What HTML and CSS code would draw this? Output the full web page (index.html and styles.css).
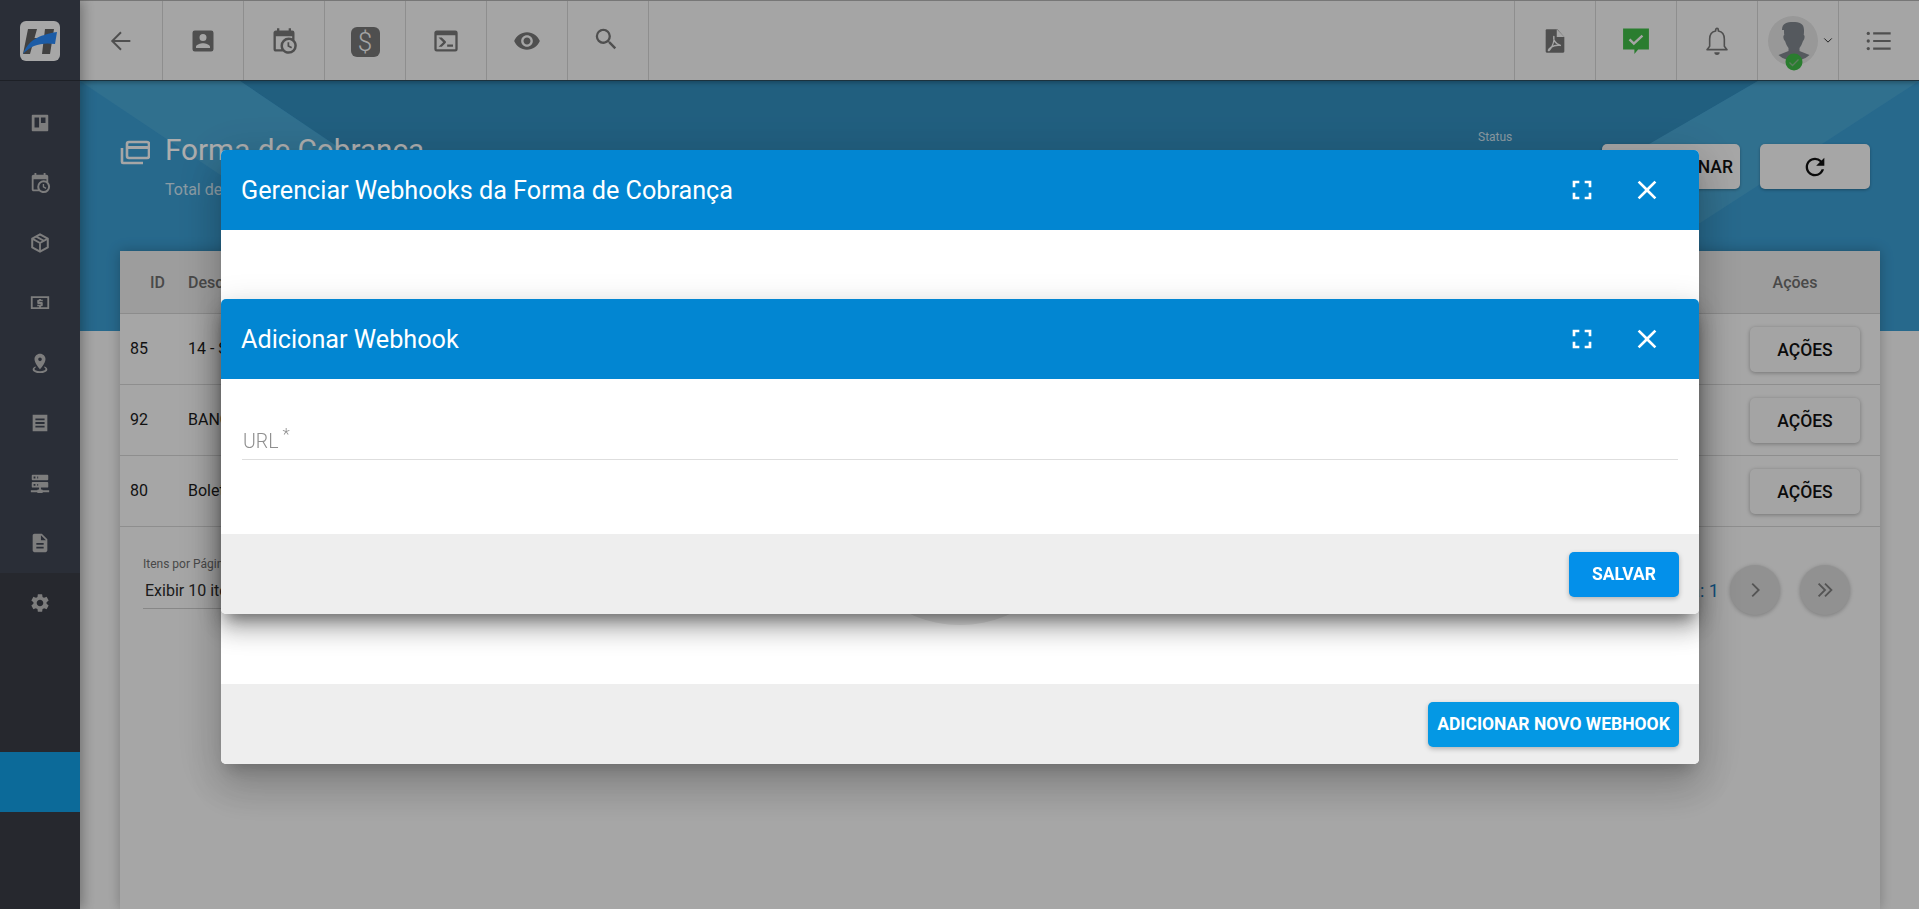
FILE: index.html
```html
<!DOCTYPE html>
<html lang="pt-BR">
<head>
<meta charset="utf-8">
<title>Forma de Cobrança</title>
<link rel="stylesheet" href="styles.css">
</head>
<body>
<svg class="defs" width="0" height="0" aria-hidden="true">
  <symbol id="i-calclock" viewBox="0 0 24 24"><path d="M15,13H16.5V15.82L18.94,17.23L18.19,18.53L15,16.69V13M19,8H5V19H9.67C9.24,18.09 9,17.07 9,16A7,7 0 0,1 16,9C17.07,9 18.09,9.24 19,9.67V8M5,21C3.89,21 3,20.1 3,19V5C3,3.89 3.89,3 5,3H6V1H8V3H16V1H18V3H19A2,2 0 0,1 21,5V11.1C22.24,12.36 23,14.09 23,16A7,7 0 0,1 16,23C14.09,23 12.36,22.24 11.1,21H5M16,11.15A4.85,4.85 0 0,0 11.15,16C11.15,18.68 13.32,20.85 16,20.85A4.85,4.85 0 0,0 20.85,16C20.85,13.32 18.68,11.15 16,11.15Z"/></symbol>
  <symbol id="i-full" viewBox="0 0 24 24"><path d="M7 14H5v5h5v-2H7v-3zm-2-4h2V7h3V5H5v5zm12 7h-3v2h5v-5h-2v3zM14 5v2h3v3h2V5h-5z"/></symbol>
  <symbol id="i-close" viewBox="0 0 24 24"><path d="M19 6.41L17.59 5 12 10.59 6.41 5 5 6.41 10.59 12 5 17.59 6.41 19 12 13.41 17.59 19 19 17.59 13.41 12z"/></symbol>
</svg>

<div class="app">
  <aside class="sidebar">
    <div class="logo-cell">
      <svg class="logo" viewBox="0 0 40 40">
        <rect width="40" height="40" rx="6" fill="#f6f6f6"/>
        <path d="M8 8h9L10 33H3zM25 8h9l-4 25h-8zM12 17h18l-1 6H11z" fill="#606060"/>
        <path d="M3 33C8 20 18 14 37 11l-2 12C22 21 11 24 3 33z" fill="#2a88f5"/>
      </svg>
    </div>
    <nav class="side-nav">
      <a class="side-item"><svg viewBox="0 0 24 24"><path fill-rule="evenodd" d="M4 3h16a1 1 0 011 1v16a1 1 0 01-1 1H4a1 1 0 01-1-1V4a1 1 0 011-1zm2 3v11h5V6H6zm7 0v6h5V6h-5z"/></svg></a>
      <a class="side-item"><svg><use href="#i-calclock"/></svg></a>
      <a class="side-item"><svg viewBox="0 0 24 24"><path d="M12 2.500l8.500 4.700v9.600L12 21.500l-8.500-4.700V7.200L12 2.500z" fill="none" stroke="currentColor" stroke-width="2.200" stroke-linejoin="round"/><path d="M4 7.500l8 4.500 8-4.500M12 12v9M8 5l8 4.600" fill="none" stroke="currentColor" stroke-width="2"/></svg></a>
      <a class="side-item"><svg viewBox="0 0 24 24"><path fill-rule="evenodd" d="M2 5h20v14H2V5zm2 2v10h16V7H4zm7 1h2v1h2v1.600h-3.600v.8H14a1 1 0 011 1V15a1 1 0 01-1 1h-1v1h-2v-1H9v-1.600h3.600v-.8H10a1 1 0 01-1-1V10a1 1 0 011-1h1V8z" transform="translate(0 -.5)"/></svg></a>
      <a class="side-item"><svg viewBox="0 0 24 24"><path d="M12,2C15.31,2 18,4.66 18,7.95C18,12.41 12,19 12,19C12,19 6,12.41 6,7.95C6,4.66 8.69,2 12,2M12,6A2,2 0 0,0 10,8A2,2 0 0,0 12,10A2,2 0 0,0 14,8A2,2 0 0,0 12,6M20,19C20,21.21 16.42,23 12,23C7.58,23 4,21.21 4,19C4,17.71 5.22,16.56 7.11,15.83L7.75,16.74C6.67,17.19 6,17.81 6,18.5C6,19.88 8.69,21 12,21C15.31,21 18,19.88 18,18.5C18,17.81 17.33,17.19 16.25,16.74L16.89,15.83C18.78,16.56 20,17.71 20,19Z"/></svg></a>
      <a class="side-item"><svg viewBox="0 0 24 24"><path fill-rule="evenodd" d="M4 3h16v18H4V3zm3 4v2h10V7H7zm0 4v2h10v-2H7zm0 4v2h10v-2H7z"/></svg></a>
      <a class="side-item"><svg viewBox="0 0 24 24"><path d="M13,19H14A1,1 0 0,1 15,20H22V22H15A1,1 0 0,1 14,23H10A1,1 0 0,1 9,22H2V20H9A1,1 0 0,1 10,19H11V17H4A1,1 0 0,1 3,16V12A1,1 0 0,1 4,11H20A1,1 0 0,1 21,12V16A1,1 0 0,1 20,17H13V19M4,3H20A1,1 0 0,1 21,4V8A1,1 0 0,1 20,9H4A1,1 0 0,1 3,8V4A1,1 0 0,1 4,3M9,7H10V5H9V7M9,15H10V13H9V15M5,5V7H7V5H5M5,13V15H7V13H5Z"/></svg></a>
      <a class="side-item"><svg viewBox="0 0 24 24"><path d="M14 2H6c-1.100 0-1.990.9-1.990 2L4 20c0 1.100.89 2 1.990 2H18c1.100 0 2-.9 2-2V8l-6-6zm2 16H8v-2h8v2zm0-4H8v-2h8v2zm-3-5V3.500L18.500 9H13z"/></svg></a>
      <a class="side-item side-item-last"><svg viewBox="0 0 24 24"><path d="M19.14 12.94c.04-.3.06-.61.06-.94 0-.32-.02-.64-.07-.94l2.03-1.58a.49.49 0 00.12-.61l-1.92-3.32a.488.488 0 00-.59-.22l-2.39.96c-.5-.38-1.03-.7-1.62-.94l-.36-2.54a.484.484 0 00-.48-.41h-3.84c-.24 0-.43.17-.47.41l-.36 2.54c-.59.24-1.13.57-1.62.94l-2.39-.96c-.22-.08-.47 0-.59.22L2.74 8.87c-.12.21-.08.47.12.61l2.03 1.58c-.05.3-.09.63-.09.94s.02.64.07.94l-2.03 1.58a.49.49 0 00-.12.61l1.92 3.32c.12.22.37.29.59.22l2.39-.96c.5.38 1.03.7 1.62.94l.36 2.54c.05.24.24.41.48.41h3.84c.24 0 .44-.17.47-.41l.36-2.54c.59-.24 1.13-.56 1.62-.94l2.39.96c.22.08.47 0 .59-.22l1.92-3.32c.12-.22.07-.47-.12-.61l-2.01-1.58zM12 15.6c-1.98 0-3.6-1.62-3.6-3.6s1.62-3.6 3.6-3.6 3.6 1.62 3.6 3.6-1.62 3.6-3.6 3.6z"/></svg></a>
    </nav>
    <div class="side-rest">
      <div class="side-active"></div>
    </div>
  </aside>

  <div class="main">
    <header class="topbar">
      <a class="top-cell top-cell-first"><svg viewBox="0 0 24 24" class="ic"><path d="M20 12H4.500M12 4.500L4.500 12l7.500 7.500" fill="none" stroke="currentColor" stroke-width="1.700"/></svg></a>
      <a class="top-cell"><svg viewBox="0 0 24 24" class="ic"><path d="M3 5v14a2 2 0 002 2h14a2 2 0 002-2V5a2 2 0 00-2-2H5a2 2 0 00-2 2zm12 4a3 3 0 11-6 0 3 3 0 016 0zm-9 8c0-2 4-3.100 6-3.100s6 1.100 6 3.100v1H6v-1z"/></svg></a>
      <a class="top-cell"><svg class="ic"><use href="#i-calclock"/></svg></a>
      <a class="top-cell"><span class="dollar">$</span></a>
      <a class="top-cell"><svg viewBox="0 0 24 24" class="ic"><path d="M20,19V7H4V19H20M20,3A2,2 0 0,1 22,5V19A2,2 0 0,1 20,21H4A2,2 0 0,1 2,19V5C2,3.89 2.9,3 4,3H20M13,17V15H18V17H13M9.58,13L5.57,9H8.4L11.7,12.3C12.09,12.69 12.09,13.33 11.7,13.72L8.42,17H5.59L9.58,13Z"/></svg></a>
      <a class="top-cell"><svg viewBox="0 0 24 24" class="ic"><path d="M12 4.500C7 4.500 2.730 7.610 1 12c1.730 4.390 6 7.500 11 7.500s9.270-3.110 11-7.500c-1.730-4.390-6-7.500-11-7.500zM12 17c-2.760 0-5-2.240-5-5s2.240-5 5-5 5 2.240 5 5-2.240 5-5 5zm0-8c-1.660 0-3 1.340-3 3s1.340 3 3 3 3-1.340 3-3-1.340-3-3-3z"/></svg></a>
      <a class="top-cell"><svg viewBox="0 0 24 24" class="ic"><path d="M15.500 14h-.79l-.28-.27A6.471 6.471 0 0016 9.500 6.500 6.500 0 109.500 16c1.610 0 3.090-.59 4.230-1.570l.27.28v.79l5 4.990L20.490 19l-4.990-5zm-6 0C7.010 14 5 11.990 5 9.500S7.010 5 9.500 5 14 7.010 14 9.500 11.990 14 9.500 14z" transform="translate(-1.500 -1.500)"/></svg></a>
      <div class="top-space"></div>
      <a class="top-cell top-cell-r"><svg viewBox="0 0 24 24" class="ic"><path d="M5 2h9l6 6.500V21a1 1 0 01-1 1H5a1 1 0 01-1-1V3a1 1 0 011-1z"/><path d="M13.500 2v6.500H20" fill="#f4f4f4"/><path d="M11 8c-.6 3 1 6 5.600 7.800-3-.6-7.500.2-9.800 3.200-1 1.300-.3 1.600.5.700C9.600 17 11.600 12 11 8z" fill="none" stroke="#f4f4f4" stroke-width="1.200" stroke-linejoin="round"/></svg></a>
      <a class="top-cell top-cell-r"><svg viewBox="0 0 26 26" class="ic"><path d="M1 1.500h24v19.500H15l-3.500 4v-4H1z" fill="#3fb846"/><path d="M7 11.500l4 4 8-7.500" fill="none" stroke="#f4f4f4" stroke-width="2.200"/></svg></a>
      <a class="top-cell top-cell-r"><svg viewBox="0 0 24 24" class="ic-bell"><path d="M12 2.500a1 1 0 011 1v1c3 .6 4.500 3.200 4.500 6v5.500l2 2.500h-15l2-2.500v-5.500c0-2.800 1.500-5.400 4.500-6v-1a1 1 0 011-1z" fill="none" stroke="currentColor" stroke-width="1.200" stroke-linejoin="round"/><path d="M10 20.500h4a2 2 0 01-4 0z"/></svg></a>
      <a class="top-cell top-cell-r top-user">
        <span class="avatar">
          <svg viewBox="0 0 50 50" class="avatar-img">
            <circle cx="25" cy="25" r="25" fill="#e0e0e0"/>
            <path d="M14 14c0-7 5-8 11-8s11 1 11 8c0 2 0 4-.3 5 1.300 0 1.300 4-.7 6-1 3-2 5-3.500 7v3l10 4a25 25 0 01-4 3 25 25 0 01-23 0 25 25 0 01-4-3l10-4v-3c-1.500-2-2.500-4-3.500-7-2-2-2-6-.7-6-.3-1-.3-3-.3-5z" fill="#7e848b"/>
          </svg>
          <svg viewBox="0 0 18 18" class="avatar-badge"><circle cx="9" cy="9" r="8.500" fill="#3fb846"/><path d="M4.500 9.500l3 3 6-6" fill="none" stroke="#8bb98d" stroke-width="1.300"/></svg>
        </span>
        <svg viewBox="0 0 12 8" class="caret"><path d="M1.500 1.500L6 6l4.500-4.500" fill="none" stroke="currentColor" stroke-width="1.200"/></svg>
      </a>
      <a class="top-cell top-cell-r"><svg viewBox="0 0 24 24" class="ic"><path d="M7 5.500h15M7 12h15M7 18.500h15" fill="none" stroke="currentColor" stroke-width="1.800"/><circle cx="2.800" cy="5.500" r="1.400"/><circle cx="2.800" cy="12" r="1.400"/><circle cx="2.800" cy="18.500" r="1.400"/></svg></a>
    </header>

    <section class="banner">
      <svg class="banner-art" viewBox="0 0 1839 250" preserveAspectRatio="none" aria-hidden="true">
        <rect width="1839" height="250" fill="#318cbc"/>
        <path d="M0 0H160L450 195V250H0z" fill="#3a9bcf"/>
        <path d="M0 0H160L330 115H172z" fill="#48a5d2"/>
        <path d="M1678 0H1839V250H1250z" fill="#3a9bcf"/>
        <path d="M1678 0H1839L1620 142H1433z" fill="#48a5d2"/>
      </svg>
      <div class="page-head">
        <svg viewBox="0 0 30 30" class="head-icon"><path d="M2 10v14a1 1 0 001 1h20" fill="none" stroke="currentColor" stroke-width="2.600"/><rect x="7" y="4" width="22" height="16" rx="2" fill="none" stroke="currentColor" stroke-width="2.600"/><path d="M8 8h20v3H8z" fill="currentColor"/></svg>
        <div class="head-text">
          <h1 class="head-title">Forma de Cobrança</h1>
          <p class="head-sub">Total de registros: 3</p>
        </div>
      </div>
      <div class="head-actions">
        <div class="status-field"><span class="status-label">Status</span></div>
        <button class="btn-flat">ADICIONAR</button>
        <button class="btn-flat btn-refresh"><svg viewBox="0 0 24 24" class="refresh"><path d="M17.650 6.350A7.958 7.958 0 0012 4c-4.420 0-7.990 3.580-7.990 8s3.570 8 7.990 8c3.730 0 6.840-2.550 7.730-6h-2.080A5.990 5.990 0 0112 18c-3.310 0-6-2.690-6-6s2.690-6 6-6c1.660 0 3.140.690 4.220 1.780L13 11h7V4l-2.350 2.350z"/></svg></button>
      </div>
    </section>

    <section class="card">
      <div class="t-head">
        <span class="c-id">ID</span>
        <span class="c-desc">Descrição</span>
        <span class="c-act">Ações</span>
      </div>
      <div class="t-row"><span class="c-num">85</span><span class="c-desc">14 - Sicoob</span><button class="btn-act">AÇÕES</button></div>
      <div class="t-row"><span class="c-num">92</span><span class="c-desc">BANCO</span><button class="btn-act">AÇÕES</button></div>
      <div class="t-row"><span class="c-num">80</span><span class="c-desc">Boleto</span><button class="btn-act">AÇÕES</button></div>
      <div class="t-foot">
        <div class="per-page">
          <span class="per-label">Itens por Página</span>
          <span class="per-value">Exibir 10 itens</span>
        </div>
        <div class="pager">
          <span class="pager-text">Página: 1</span>
          <span class="round"><svg viewBox="0 0 24 24"><path d="M9 5l7 7-7 7" fill="none" stroke="currentColor" stroke-width="2"/></svg></span>
          <span class="round"><svg viewBox="0 0 24 24"><path d="M5 5l7 7-7 7M12 5l7 7-7 7" fill="none" stroke="currentColor" stroke-width="2"/></svg></span>
        </div>
      </div>
    </section>
  </div>
</div>

<div class="backdrop"></div>

<div class="dialog dialog-one">
  <div class="dlg-head">
    <h2 class="dlg-title">Gerenciar Webhooks da Forma de Cobrança</h2>
    <button class="dlg-icon"><svg><use href="#i-full"/></svg></button>
    <button class="dlg-icon"><svg><use href="#i-close"/></svg></button>
  </div>
  <div class="dlg-body-one"><div class="disc"></div></div>
  <div class="dlg-foot"><button class="btn-primary btn-wide">ADICIONAR NOVO WEBHOOK</button></div>
</div>

<div class="dialog dialog-two">
  <div class="dlg-head">
    <h2 class="dlg-title">Adicionar Webhook</h2>
    <button class="dlg-icon"><svg><use href="#i-full"/></svg></button>
    <button class="dlg-icon"><svg><use href="#i-close"/></svg></button>
  </div>
  <div class="dlg-body-two">
    <div class="field"><span class="field-label">URL</span><span class="field-req">*</span></div>
  </div>
  <div class="dlg-foot"><button class="btn-primary btn-save">SALVAR</button></div>
</div>
</body>
</html>
```

FILE: styles.css
```css
* { box-sizing: border-box; }
html, body { margin: 0; height: 100%; overflow: hidden; }
body { font-family: Roboto, "Liberation Sans", sans-serif; background: #f4f4f4; color: #1a1a1a; }
.defs { display: block; position: absolute; }
button { font-family: inherit; border: 0; padding: 0; }
h1, h2, p { margin: 0; font-weight: 400; }

.app { display: flex; height: 909px; }

.sidebar { width: 80px; flex: none; display: flex; flex-direction: column; background: #3e4452; color: #b9b9b9; box-shadow: 3px 0 12px rgba(0,0,0,.3); position: relative; z-index: 2; }
.logo-cell { height: 81px; flex: none; padding: 21px 20px 0; border-bottom: 1px solid #2c3038; }
.logo { width: 40px; height: 40px; display: block; }
.side-nav { padding-top: 12px; display: flex; flex-direction: column; }
.side-item { height: 60px; display: flex; align-items: center; justify-content: center; }
.side-item svg { width: 22px; height: 22px; fill: currentColor; }
.side-item-last { background: #383b44; }
.side-rest { flex: 1; background: #383b44; padding-top: 119px; }
.side-active { height: 60px; background: #129ce2; }

.main { flex: 1; min-width: 0; display: flex; flex-direction: column; }

.topbar { height: 81px; flex: none; display: flex; background: #f4f4f4; border-top: 1px solid #b0b0b0; border-bottom: 1px solid #2a4a5c; color: #757575; position: relative; z-index: 1; box-shadow: 0 2px 4px rgba(0,0,0,.25); }
.top-cell { width: 81px; flex: none; display: flex; align-items: center; justify-content: center; border-right: 1px solid #d2d2d2; }
.top-cell-first { width: 83px; }
.top-cell-r { border-right: 0; border-left: 1px solid #d2d2d2; }
.top-space { flex: 1; }
.ic { width: 28px; height: 28px; fill: currentColor; }
.ic-bell { width: 32px; height: 32px; fill: currentColor; }
.dollar { width: 29px; height: 30px; border-radius: 6px; background: #757575; color: #f4f4f4; font-size: 26px; font-weight: 300; line-height: 30px; text-align: center; margin-top: 2px; }
.top-user { gap: 5px; justify-content: flex-start; padding-left: 10px; color: #333; }
.avatar { display: block; position: relative; width: 50px; height: 50px; }
.avatar-img { width: 50px; height: 50px; display: block; }
.avatar-badge { position: absolute; left: 17px; top: 37px; width: 18px; height: 18px; }
.caret { width: 10px; height: 7px; }

.banner { height: 250px; flex: none; position: relative; display: flex; justify-content: space-between; padding: 63px 49px 0 40px; overflow: hidden; }
.banner-art { position: absolute; inset: 0; width: 100%; height: 100%; }
.page-head { position: relative; display: flex; gap: 15px; color: #fff; }
.head-icon { width: 30px; height: 30px; color: #f5f5f5; margin-top: -6px; flex: none; }
.head-title { font-size: 29.700px; line-height: 36px; margin-top: -12px; font-weight: 400; color: #fff; white-space: nowrap; }
.head-sub { font-size: 16px; line-height: 20px; margin-top: 12px; color: rgba(255,255,255,.75); white-space: nowrap; }
.head-actions { position: relative; display: flex; gap: 20px; }
.status-field { width: 104px; margin-top: -14px; }
.status-label { font-size: 12px; line-height: 14px; color: rgba(255,255,255,.75); display: block; }
.btn-flat { width: 138px; height: 45px; border-radius: 5px; background: #f5f5f5; color: #111; font-size: 17.500px; font-weight: 500; text-align: right; padding-right: 7px; box-shadow: 0 1px 3px rgba(0,0,0,.3); }
.btn-refresh { width: 110px; display: flex; align-items: center; justify-content: center; padding: 0; }
.refresh { width: 28px; height: 28px; fill: #111; }

.card { flex: 1; margin: -80px 39px 0 40px; background: #f5f5f5; position: relative; box-shadow: 0 0 12px rgba(0,0,0,.25); }
.t-head { height: 63px; display: flex; align-items: center; background: #e8e8e8; border-bottom: 1px solid #cfcfcf; color: #6c6c6c; font-size: 16px; font-weight: 500; }
.c-id { width: 68px; padding-left: 30px; flex: none; }
.c-desc { flex: 1; }
.c-act { width: 130px; margin-right: 20px; text-align: center; flex: none; }
.t-row { height: 71px; display: flex; align-items: center; border-bottom: 1px solid #d2d2d2; font-size: 16px; padding-right: 20px; padding-bottom: 2px; }
.c-num { width: 68px; padding-left: 10px; flex: none; }
.btn-act { width: 110px; height: 45px; border-radius: 5px; background: #f2f2f2; color: #111; font-size: 17.500px; font-weight: 500; box-shadow: 0 1px 4px rgba(0,0,0,.3); margin-top: 3px; }
.t-foot { display: flex; justify-content: space-between; padding: 28px 30px 0 23px; }
.per-page { width: 240px; height: 54px; border-bottom: 1px solid #c8c8c8; display: flex; flex-direction: column; }
.per-label { font-size: 12px; line-height: 16px; margin-top: 1px; color: #6c6c6c; }
.per-value { font-size: 16px; line-height: 22px; margin-top: 8px; padding-left: 2px; color: #2a2a2a; }
.pager { display: flex; align-items: center; gap: 20px; margin-top: 10px; height: 50px; }
.pager-text { font-size: 18px; color: #1875b8; margin-right: -9px; white-space: nowrap; }
.round { width: 50px; height: 50px; border-radius: 50%; background: #d6d6d6; color: #7c7c7c; display: flex; align-items: center; justify-content: center; box-shadow: 0 1px 4px rgba(0,0,0,.25); }
.round svg { width: 22px; height: 22px; }

.backdrop { position: fixed; inset: 0; background: rgba(0,0,0,.32); z-index: 5; }

.dialog { position: fixed; left: 221px; width: 1478px; z-index: 6; background: #fff; border-radius: 5px; overflow: hidden; display: flex; flex-direction: column; }
.dialog-one { top: 150px; height: 614px; box-shadow: 0 11px 15px -7px rgba(0,0,0,.2), 0 24px 38px 3px rgba(0,0,0,.14), 0 9px 46px 8px rgba(0,0,0,.12); }
.dialog-two { top: 299px; height: 315px; box-shadow: 0 11px 15px -7px rgba(0,0,0,.45), 0 16px 24px 2px rgba(0,0,0,.2), 0 6px 30px 5px rgba(0,0,0,.1); overflow: visible; }
.dialog-two .dlg-head { border-radius: 5px 5px 0 0; }
.dialog-two .dlg-foot { border-radius: 0 0 5px 5px; }
.dlg-head { height: 80px; flex: none; display: flex; align-items: center; padding: 0 20px; background: #0286d2; color: #fff; }
.dlg-title { flex: 1; font-size: 25.200px; font-weight: 400; }
.dlg-icon { width: 64px; height: 64px; background: none; display: flex; align-items: center; justify-content: center; }
.dlg-icon:first-of-type { margin-right: 1px; }
.dlg-icon svg { width: 32px; height: 32px; fill: #fff; }
.dlg-body-one { flex: 1; display: flex; justify-content: center; padding-top: 157px; overflow: hidden; }
.disc { width: 238px; height: 238px; border-radius: 50%; background: #ebebeb; flex: none; }
.dlg-body-two { flex: 1; padding: 40px 21px 0; }
.field { height: 41px; border-bottom: 1px solid #dedede; display: flex; align-items: flex-end; padding: 0 0 4px 1px; color: #8f8f8f; }
.field-label { font-size: 19.500px; font-weight: 300; line-height: 26px; }
.field-req { font-size: 17px; font-weight: 300; line-height: 26px; margin: 0 0 8px 4px; }
.dlg-foot { height: 80px; flex: none; display: flex; align-items: center; justify-content: flex-end; padding-right: 20px; background: #eee; }
.btn-primary { height: 45px; border-radius: 5px; color: #fff; font-size: 17.500px; font-weight: 700; box-shadow: 0 2px 5px rgba(0,0,0,.25); white-space: nowrap; }
.btn-wide { width: 251px; background: #0498e4; }
.btn-save { width: 110px; background: #0390ea; }
```
